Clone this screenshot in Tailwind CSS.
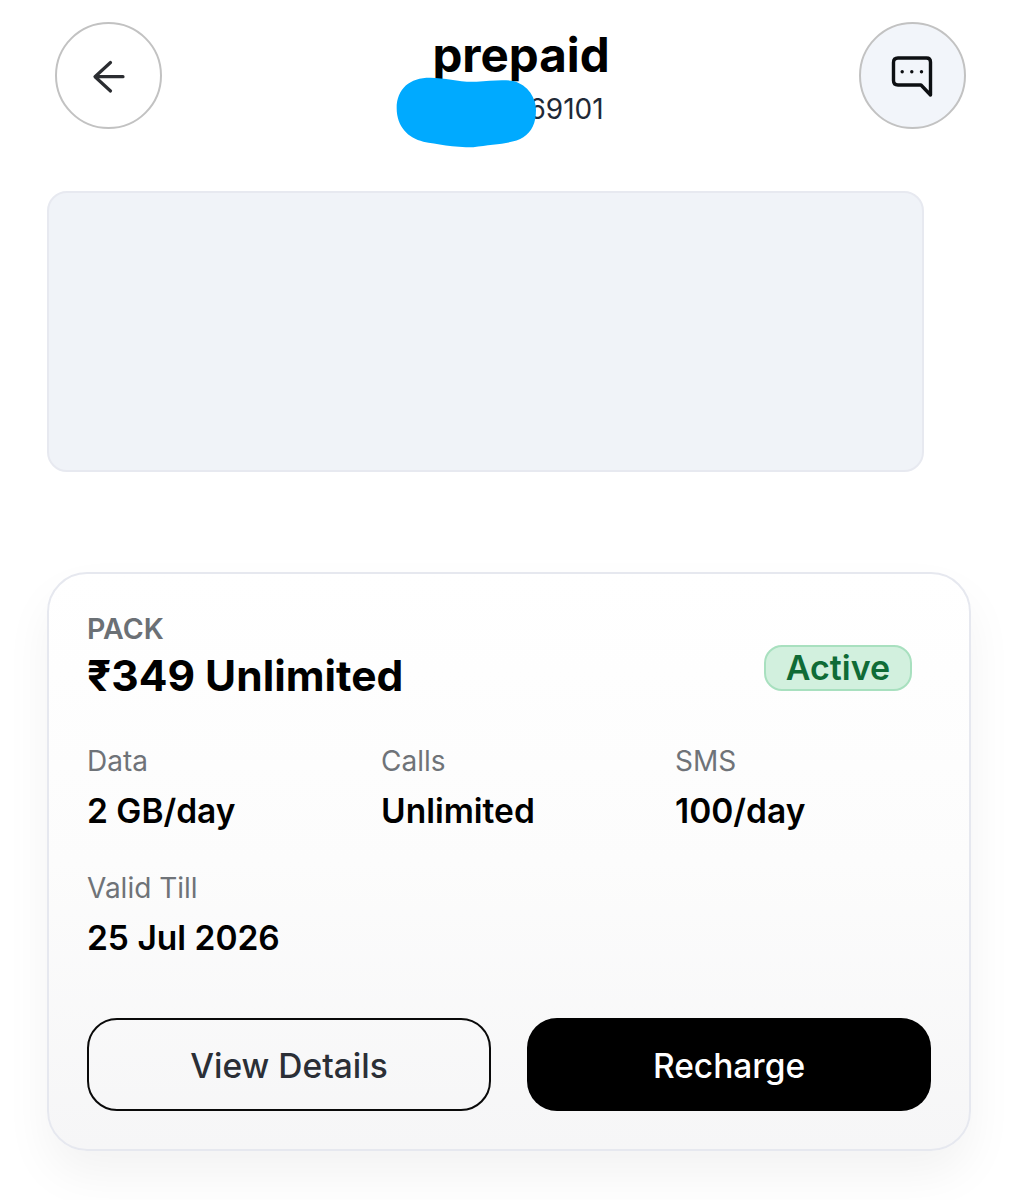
<!DOCTYPE html>
<html lang="en">
<head>
    <meta charset="UTF-8">
    <meta name="viewport" content="width=device-width, initial-scale=1.0">
    <title>Prepaid</title>
    <script src="https://cdn.jsdelivr.net/npm/@tailwindcss/browser@4"></script>
</head>
<body class="bg-white font-['Inter',sans-serif] text-black">
    <div class="relative w-[1018px] h-[1200px] overflow-hidden pl-[47px] pt-[22px]">
        <!-- Header -->
        <header class="ml-[8px] w-[911px] h-[107px] flex justify-between">
            <button class="w-[107px] h-[107px] rounded-full border-2 border-[#c2c2c2] bg-white flex items-center justify-center">
                <svg width="36" height="36" viewBox="0 0 36 36" fill="none" stroke="#2b2d31" stroke-width="3.200" stroke-linecap="round" stroke-linejoin="round">
                    <path d="M32 18.700H4.500M19.500 4.500L4 18.700L19.500 33"/>
                </svg>
            </button>
            <div class="ml-[21px] flex flex-col items-end">
                <h1 class="text-[47.500px] leading-[66px] font-bold">prepaid</h1>
                <p class="text-[28px] leading-[42px] pr-[6px] text-[#1f2937]">69101</p>
            </div>
            <button class="w-[107px] h-[107px] rounded-full border-2 border-[#c2c2c2] bg-[#f2f5fa] flex items-center justify-center">
                <svg width="44" height="44" viewBox="0 0 44 44" fill="none" stroke="#0d0f12" stroke-width="3.400" stroke-linecap="round" stroke-linejoin="round">
                    <path d="M8 4H36.500Q40.500 4 40.500 8V41L31 31H8Q3.500 31 3.500 26.500V8.500Q3.500 4 8 4Z"/>
                    <circle cx="12.200" cy="17.800" r="1.700" fill="#0d0f12" stroke="none"/>
                    <circle cx="21.800" cy="17.800" r="1.700" fill="#0d0f12" stroke="none"/>
                    <circle cx="31.500" cy="17.800" r="1.700" fill="#0d0f12" stroke="none"/>
                </svg>
            </button>
        </header>

        <!-- Banner placeholder -->
        <div class="mt-[62px] w-[877px] h-[281px] rounded-[20px] border-2 border-[#e7e9f0] bg-[#f0f3f8]"></div>

        <!-- Pack card -->
        <section class="mt-[100px] w-[924px] h-[579px] rounded-[40px] border-2 border-[#e6e8ef] bg-linear-to-b from-white via-[#fcfcfc] to-[#f6f6f7] shadow-[0_24px_48px_rgba(0,0,0,0.05)] px-[38px] pt-[36px]">
            <div class="flex justify-between">
                <div>
                    <p class="text-[28.500px] leading-[38px] font-semibold text-[#6b7075]">PACK</p>
                    <h2 class="text-[42.500px] leading-[56px] font-bold">₹349 Unlimited</h2>
                </div>
                <span class="mr-[19px] mt-[35px] w-[148px] h-[46px] rounded-[18px] border-2 border-[#a8e0bf] bg-[#d2f0de] text-[#0f6b36] text-[34px] leading-[42px] font-semibold text-center">Active</span>
            </div>

            <div class="mt-[37px] grid grid-cols-[294px_294px_1fr] gap-y-[37px]">
                <div>
                    <p class="text-[28px] leading-[40px] text-[#6f7378]">Data</p>
                    <p class="mt-[10px] text-[33.500px] leading-[40px] font-semibold">2 GB/day</p>
                </div>
                <div>
                    <p class="text-[28px] leading-[40px] text-[#6f7378]">Calls</p>
                    <p class="mt-[10px] text-[33.500px] leading-[40px] font-semibold">Unlimited</p>
                </div>
                <div>
                    <p class="text-[28px] leading-[40px] text-[#6f7378]">SMS</p>
                    <p class="mt-[10px] text-[33.500px] leading-[40px] font-semibold">100/day</p>
                </div>
                <div>
                    <p class="text-[28px] leading-[40px] text-[#6f7378]">Valid Till</p>
                    <p class="mt-[10px] text-[33.500px] leading-[40px] font-semibold whitespace-nowrap">25 Jul 2026</p>
                </div>
            </div>

            <div class="mt-[60px] flex gap-[36px]">
                <button class="w-[404px] h-[93px] pt-[3px] rounded-[30px] border-2 border-[#0a0a0a] text-[#2b2f36] text-[33.500px] font-medium">View Details</button>
                <button class="w-[404px] h-[93px] pt-[3px] rounded-[30px] bg-black text-white text-[33.500px] font-medium">Recharge</button>
            </div>
        </section>

        <!-- Scribble over the phone number -->
        <svg class="absolute left-[380px] top-[20px]" width="240" height="140" viewBox="0 0 720 420">
            <path fill="#00aaff" d="M50 265C50 205 90 173 150 173C200 173 240 188 290 185C330 182 370 178 400 183C445 195 468 235 468 270C468 310 455 335 430 352C400 372 340 372 280 382C220 382 170 372 130 365C85 355 50 320 50 265Z"/>
        </svg>
    </div>
</body>
</html>
